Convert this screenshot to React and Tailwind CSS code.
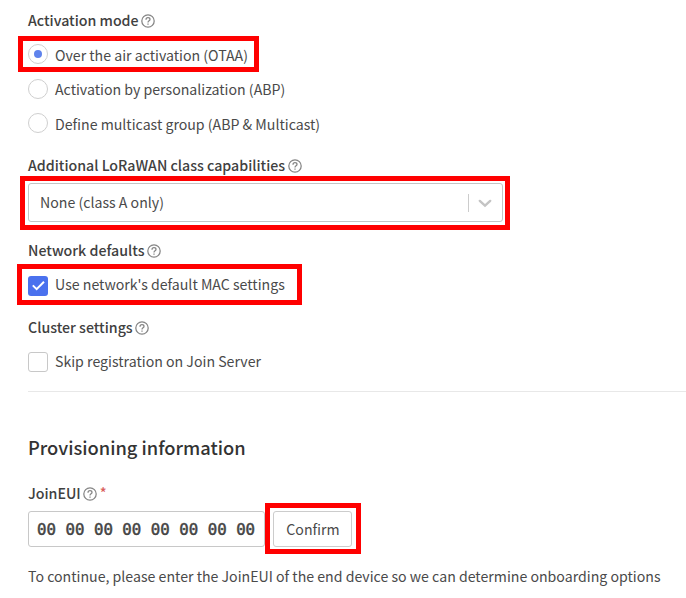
import React from "react";

const SANS = "font-['Noto_Sans_CJK_SC','Noto_Sans',sans-serif]";

function Help() {
  return (
    <svg className="mt-px h-[14px] w-[14px] shrink-0" viewBox="0 0 14 14" fill="none" stroke="#858585" strokeWidth="1.25">
      <circle cx="7" cy="7" r="6.2" />
      <path d="M5 5.7C5 4.4 5.9 3.7 7 3.7S9 4.4 9 5.5C9 6.7 7 6.9 7 8.4" />
      <path d="M7 9.4V10.7" />
    </svg>
  );
}

function Label({ children, className, required }) {
  return (
    <div className={`flex items-center gap-[2.5px] pl-7 text-[14.2px] font-medium text-[#404040] whitespace-nowrap ${className}`}>
      <span>{children}</span>
      <Help />
      {required && <span className="-mt-[3px] text-[#d9605c]">*</span>}
    </div>
  );
}

function Radio({ checked }) {
  return (
    <span className="flex h-5 w-5 shrink-0 items-center justify-center rounded-full border border-[#cfcfcf] bg-white">
      {checked && <span className="h-2 w-2 rounded-full bg-[#5f83ec]" />}
    </span>
  );
}

export default function App() {
  return (
    <main className={`flex h-[598px] w-[686px] flex-col overflow-hidden bg-white text-[14.15px] leading-5 text-[#4a4a4a] ${SANS}`}>
      <Label className="h-9 pt-1">Activation mode</Label>
      <label className="ml-[18px] flex h-9 w-[241px] items-center gap-[7px] border-[5px] border-[#ff0000] pl-[5px] whitespace-nowrap">
        <Radio checked />
        <span className="pt-0.5">Over the air activation (OTAA)</span>
      </label>
      <label className="flex h-[34px] items-center gap-[7px] pl-7">
        <Radio />
        <span>Activation by personalization (ABP)</span>
      </label>
      <label className="flex h-[34px] items-center gap-[7px] pl-7">
        <Radio />
        <span className="pt-0.5">Define multicast group (ABP &amp; Multicast)</span>
      </label>

      <Label className="mt-[15px] h-5">Additional LoRaWAN class capabilities</Label>
      <div className="mt-px ml-5 h-[54px] w-[490px] border-[5px] border-[#ff0000] px-[3px] pt-[2px]">
        <div className="flex h-[39px] w-[475px] items-center rounded-[3px] border border-[#c4c4c4] pl-[11px]">
          <span className="flex-1 pb-0.5">None (class A only)</span>
          <span className="h-[18px] w-px bg-[#cccccc]" />
          <svg className="mr-[10px] ml-[9px] h-[14px] w-[14px]" viewBox="0 0 14 14" fill="none" stroke="#c4c4c4" strokeWidth="2.4" strokeLinecap="round">
            <path d="M1.8 4.9L7 9.7L12.2 4.9" />
          </svg>
        </div>
      </div>

      <Label className="mt-[8px] h-6">Network defaults</Label>
      <label className="mt-[2px] ml-[17px] flex h-[41px] w-[285px] items-center gap-[7px] border-[5px] border-[#ff0000] pl-[6px] whitespace-nowrap">
        <span className="mt-[2px] flex h-[20px] w-[20px] shrink-0 items-center justify-center rounded-[3px] bg-[#4a71ee]">
          <svg className="h-[15px] w-[15px]" viewBox="0 0 15 15" fill="none" stroke="#fff" strokeWidth="2">
            <path d="M1.8 7.4L5.6 11.1L13 3.7" />
          </svg>
        </span>
        <span className="pb-px">Use network's default MAC settings</span>
      </label>

      <Label className="mt-[12px] h-5">Cluster settings</Label>
      <label className="mt-[14px] flex h-[22px] items-center gap-[7px] pl-7">
        <span className="h-5 w-5 rounded-[3px] border border-[#c8c8c8]" />
        <span className="pb-0.5">Skip registration on Join Server</span>
      </label>
      <hr className="mt-[18px] ml-7 border-[#e8e8e8]" />

      <h2 className="mt-[41px] ml-7 h-7 text-[18.3px] leading-7 font-medium text-[#333]">Provisioning information</h2>
      <Label className="mt-[22px] h-5" required>JoinEUI</Label>
      <div className="flex h-[51px] items-center pl-7">
        <div className="flex h-9 w-[237px] items-center rounded-[3px] border border-[#c8c8c8] pt-0.5 pl-2 font-['DejaVu_Sans_Mono',monospace] text-[15.75px] text-[#444] whitespace-pre [-webkit-text-stroke:0.5px_#444]">
          00 00 00 00 00 00 00 00
        </div>
        <div className="flex h-[51px] w-24 items-center border-[5px] border-[#ff0000] pl-[3px]">
          <button className="h-9 w-[79px] rounded-[3px] border border-[#cccccc] pl-px">Confirm</button>
        </div>
      </div>
      <p className="mt-3 ml-7 whitespace-nowrap">
        To continue, please enter the JoinEUI of the end device so we can determine onboarding options
      </p>
    </main>
  );
}
